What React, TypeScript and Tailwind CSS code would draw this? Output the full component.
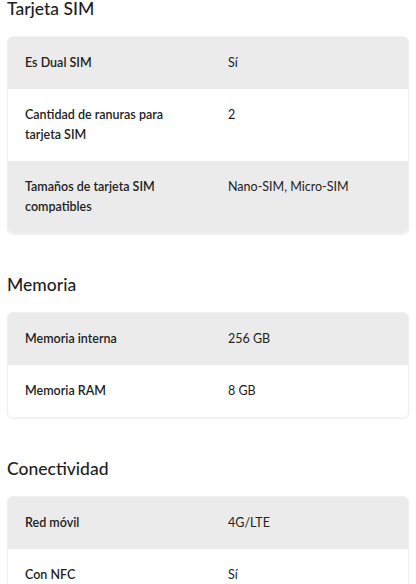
const sections = [
  {
    title: 'Tarjeta SIM',
    rows: [
      { label: 'Es Dual SIM', value: 'Sí' },
      { label: 'Cantidad de ranuras para tarjeta SIM', value: '2' },
      { label: 'Tamaños de tarjeta SIM compatibles', value: 'Nano-SIM, Micro-SIM' },
    ],
  },
  {
    title: 'Memoria',
    rows: [
      { label: 'Memoria interna', value: '256 GB' },
      { label: 'Memoria RAM', value: '8 GB' },
    ],
  },
  {
    title: 'Conectividad',
    rows: [
      { label: 'Red móvil', value: '4G/LTE' },
      { label: 'Con NFC', value: 'Sí' },
      { label: 'Con Bluetooth', value: 'Sí' },
    ],
  },
];

export default function App() {
  return (
    <div className="h-[584px] overflow-hidden bg-white px-[7px] text-[#222] font-['Lato',sans-serif]">
      <div className="flex flex-col gap-[42px]">
        {sections.map((section) => (
          <section key={section.title}>
            <h2 className="mb-[18px] text-[17.5px] leading-[18px] font-medium text-[#1e1e1e]">{section.title}</h2>
            <div className="overflow-hidden rounded-md border border-[#f0f0f0] shadow-[0_1px_2px_rgba(0,0,0,0.06)]">
              {section.rows.map((row, i) => (
                <div
                  key={row.label}
                  className={`flex py-4 pl-[17px] text-[12.5px] leading-5 ${i % 2 === 0 ? 'bg-[#ebebeb]' : 'bg-white'}`}
                >
                  <div className="w-[203px] shrink-0 pr-[30px] font-semibold">{row.label}</div>
                  <div className="flex-1">{row.value}</div>
                </div>
              ))}
            </div>
          </section>
        ))}
      </div>
    </div>
  );
}
